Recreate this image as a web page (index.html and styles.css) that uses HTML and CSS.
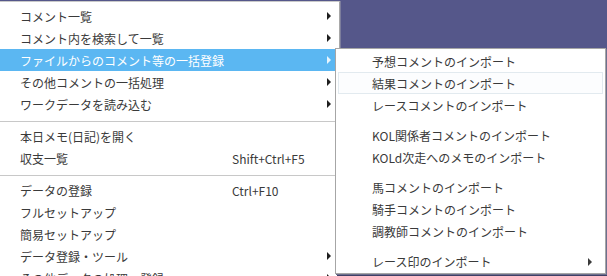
FILE: index.html
```html
<!DOCTYPE html>
<html lang="ja">
<head>
    <meta charset="UTF-8">
    <title>メニュー</title>
    <link rel="stylesheet" href="styles.css">
</head>
<body>

    <div class="main-menu">
        <!-- コメント関連 -->
        <div class="item has-sub"><span class="label">コメント一覧</span></div>
        <div class="item has-sub"><span class="label">コメント内を検索して一覧</span></div>
        <div class="item has-sub active"><span class="label">ファイルからのコメント等の一括登録</span></div>
        <div class="item has-sub"><span class="label">その他コメントの一括処理</span></div>
        <div class="item has-sub"><span class="label">ワークデータを読み込む</span></div>
        <div class="sep"></div>
        <div class="item"><span class="label">本日メモ(日記)を開く</span></div>
        <div class="item"><span class="label">収支一覧</span><span class="key">Shift+Ctrl+F5</span></div>
        <div class="sep"></div>
        <!-- データ関連 -->
        <div class="item"><span class="label">データの登録</span><span class="key">Ctrl+F10</span></div>
        <div class="item"><span class="label">フルセットアップ</span></div>
        <div class="item"><span class="label">簡易セットアップ</span></div>
        <div class="item has-sub"><span class="label">データ登録・ツール</span></div>
        <div class="item has-sub"><span class="label">その他データの処理・登録</span></div>
    </div>

    <!-- Submenu flyout -->
    <div class="sub-menu">
        <div class="item"><span class="label">予想コメントのインポート</span></div>
        <div class="item hover"><span class="label">結果コメントのインポート</span></div>
        <div class="item"><span class="label">レースコメントのインポート</span></div>
        <div class="gap"></div>
        <div class="item"><span class="label">KOL関係者コメントのインポート</span></div>
        <div class="item"><span class="label">KOLd次走へのメモのインポート</span></div>
        <div class="gap"></div>
        <div class="item"><span class="label">馬コメントのインポート</span></div>
        <div class="item"><span class="label">騎手コメントのインポート</span></div>
        <div class="item"><span class="label">調教師コメントのインポート</span></div>
        <div class="gap"></div>
        <div class="item has-sub"><span class="label">レース印のインポート</span></div>
    </div>

</body>
</html>
```

FILE: styles.css
```css
body, html {
    margin: 0;
    height: 100%;
    overflow: hidden;
    background: #55578a;
    font-family: "Noto Sans CJK JP", "Noto Sans", sans-serif;
    font-size: 12px;
    color: #3a3a3a;
}

body {
    padding-top: 1px;
    box-sizing: border-box;
}

.main-menu {
    width: 340px;
    box-sizing: border-box;
    background: #ffffff;
    border-top: 1px solid #c9c9c9;
    border-right: 1px solid #a8a8a8;
    padding-top: 3px;
    box-shadow: 1px 0 0 #7c7d9c;
}

.item {
    position: relative;
    display: flex;
    align-items: center;
    height: 22px;
    padding-left: 20px;
}

.main-menu .item .label {
    width: 212px;
}

.key {
    color: #3a3a3a;
}

/* submenu arrow */
.has-sub::after {
    content: "";
    position: absolute;
    top: 7px;
    right: 8px;
    border-left: 4px solid #1e1e1e;
    border-top: 4px solid transparent;
    border-bottom: 4px solid transparent;
}

.main-menu .active {
    background: #5bb7f2;
    color: #ffffff;
}

.main-menu .active::after {
    border-left-color: #e8f5fd;
}

.sep {
    height: 10px;
    box-sizing: border-box;
    padding-top: 6px;
}

.sep::before {
    content: "";
    display: block;
    height: 1px;
    background: #c8c8c8;
}

/* Flyout */
.sub-menu {
    position: absolute;
    left: 335px;
    top: 48px;
    width: 271px;
    box-sizing: border-box;
    background: #ffffff;
    border: 1px solid #a6a6a6;
    padding: 1px 2px;
    box-shadow: 1px 1px 0 #6e6f8e, 2px 2px 0 #3f4066;
}

.sub-menu .item {
    padding-left: 33px;
    box-sizing: border-box;
    border: 1px solid transparent;
}

.sub-menu .item.hover {
    border-color: #e2eaef;
    background: #fcfdfe;
}

.sub-menu .has-sub::after {
    right: 10px;
    border-left-color: #3a3a3a;
}

.gap {
    height: 8px;
}
```
